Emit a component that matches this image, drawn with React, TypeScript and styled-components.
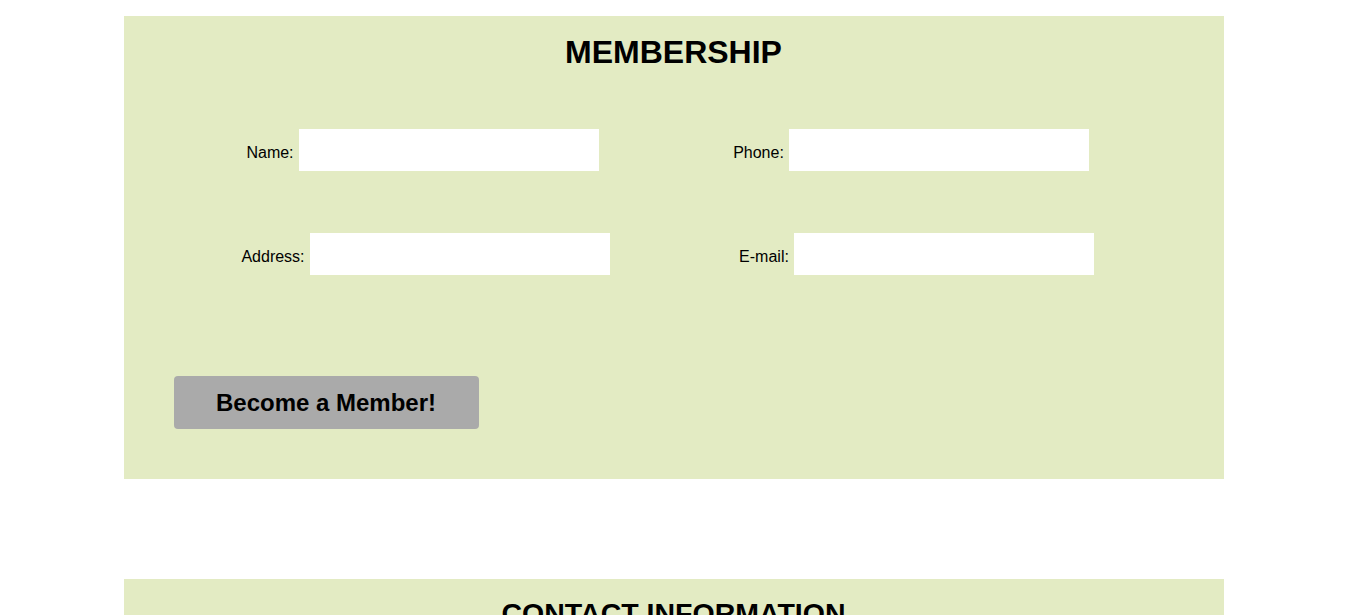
import React from "react";
import styled, { createGlobalStyle } from "styled-components";

const GlobalStyle = createGlobalStyle`
  html, body {
    margin: 0;
    padding: 0;
    background: #ffffff;
    font-family: "Liberation Sans", Arial, sans-serif;
    color: #000000;
  }
`;

const Page = styled.main`
  padding-top: 16px;
  display: flex;
  flex-direction: column;
  align-items: center;
  gap: 100px;
`;

const Panel = styled.section`
  box-sizing: border-box;
  width: 1100px;
  flex: none;
  background: #e3ebc3;
  padding: 18px 50px 50px;
  display: flex;
  flex-direction: column;
`;

const Title = styled.h2<{ $size: number }>`
  margin: 0;
  font-size: ${(p) => p.$size}px;
  line-height: 1.15;
  font-weight: 700;
  text-align: center;
`;

const FieldGrid = styled.div`
  margin-top: 58px;
  display: grid;
  grid-template-columns: 500px 480px;
  row-gap: 62px;
`;

const Cell = styled.div`
  display: flex;
  justify-content: center;
  align-items: center;
  height: 42px;
`;

const FieldGroup = styled.label<{ $shift: number }>`
  display: flex;
  align-items: center;
  gap: 5px;
  margin-left: ${(p) => (p.$shift > 0 ? 2 * p.$shift : 0)}px;
  margin-right: ${(p) => (p.$shift < 0 ? -2 * p.$shift : 0)}px;
`;

const LabelText = styled.span`
  font-size: 16px;
  line-height: 18px;
  padding-top: 6px;
  white-space: nowrap;
`;

const TextInput = styled.input`
  box-sizing: border-box;
  width: 300px;
  height: 42px;
  border: none;
  outline: none;
  background: #ffffff;
  padding: 0 8px;
  font-family: "Liberation Sans", Arial, sans-serif;
  font-size: 16px;
`;

const SubmitButton = styled.button`
  align-self: flex-start;
  margin-top: 101px;
  width: 305px;
  height: 53px;
  padding: 2px 0 0;
  border: none;
  border-radius: 4px;
  background: #aaaaaa;
  color: #000000;
  font-family: "Liberation Sans", Arial, sans-serif;
  font-size: 24px;
  font-weight: 700;
  cursor: pointer;
`;

const ContactPanel = styled(Panel)`
  height: 200px;
`;

const fields = [
  { label: "Name:", type: "text", shift: -1 },
  { label: "Phone:", type: "tel", shift: -2.5 },
  { label: "Address:", type: "text", shift: 2 },
  { label: "E-mail:", type: "email", shift: 3 },
];

export default function App() {
  return (
    <>
      <GlobalStyle />
      <Page>
        <Panel as="form" onSubmit={(e: React.FormEvent) => e.preventDefault()}>
          <Title $size={32}>MEMBERSHIP</Title>
          <FieldGrid>
            {fields.map((f) => (
              <Cell key={f.label}>
                <FieldGroup $shift={f.shift}>
                  <LabelText>{f.label}</LabelText>
                  <TextInput type={f.type} />
                </FieldGroup>
              </Cell>
            ))}
          </FieldGrid>
          <SubmitButton type="submit">Become a Member!</SubmitButton>
        </Panel>
        <ContactPanel>
          <Title $size={28.5}>CONTACT INFORMATION</Title>
        </ContactPanel>
      </Page>
    </>
  );
}
